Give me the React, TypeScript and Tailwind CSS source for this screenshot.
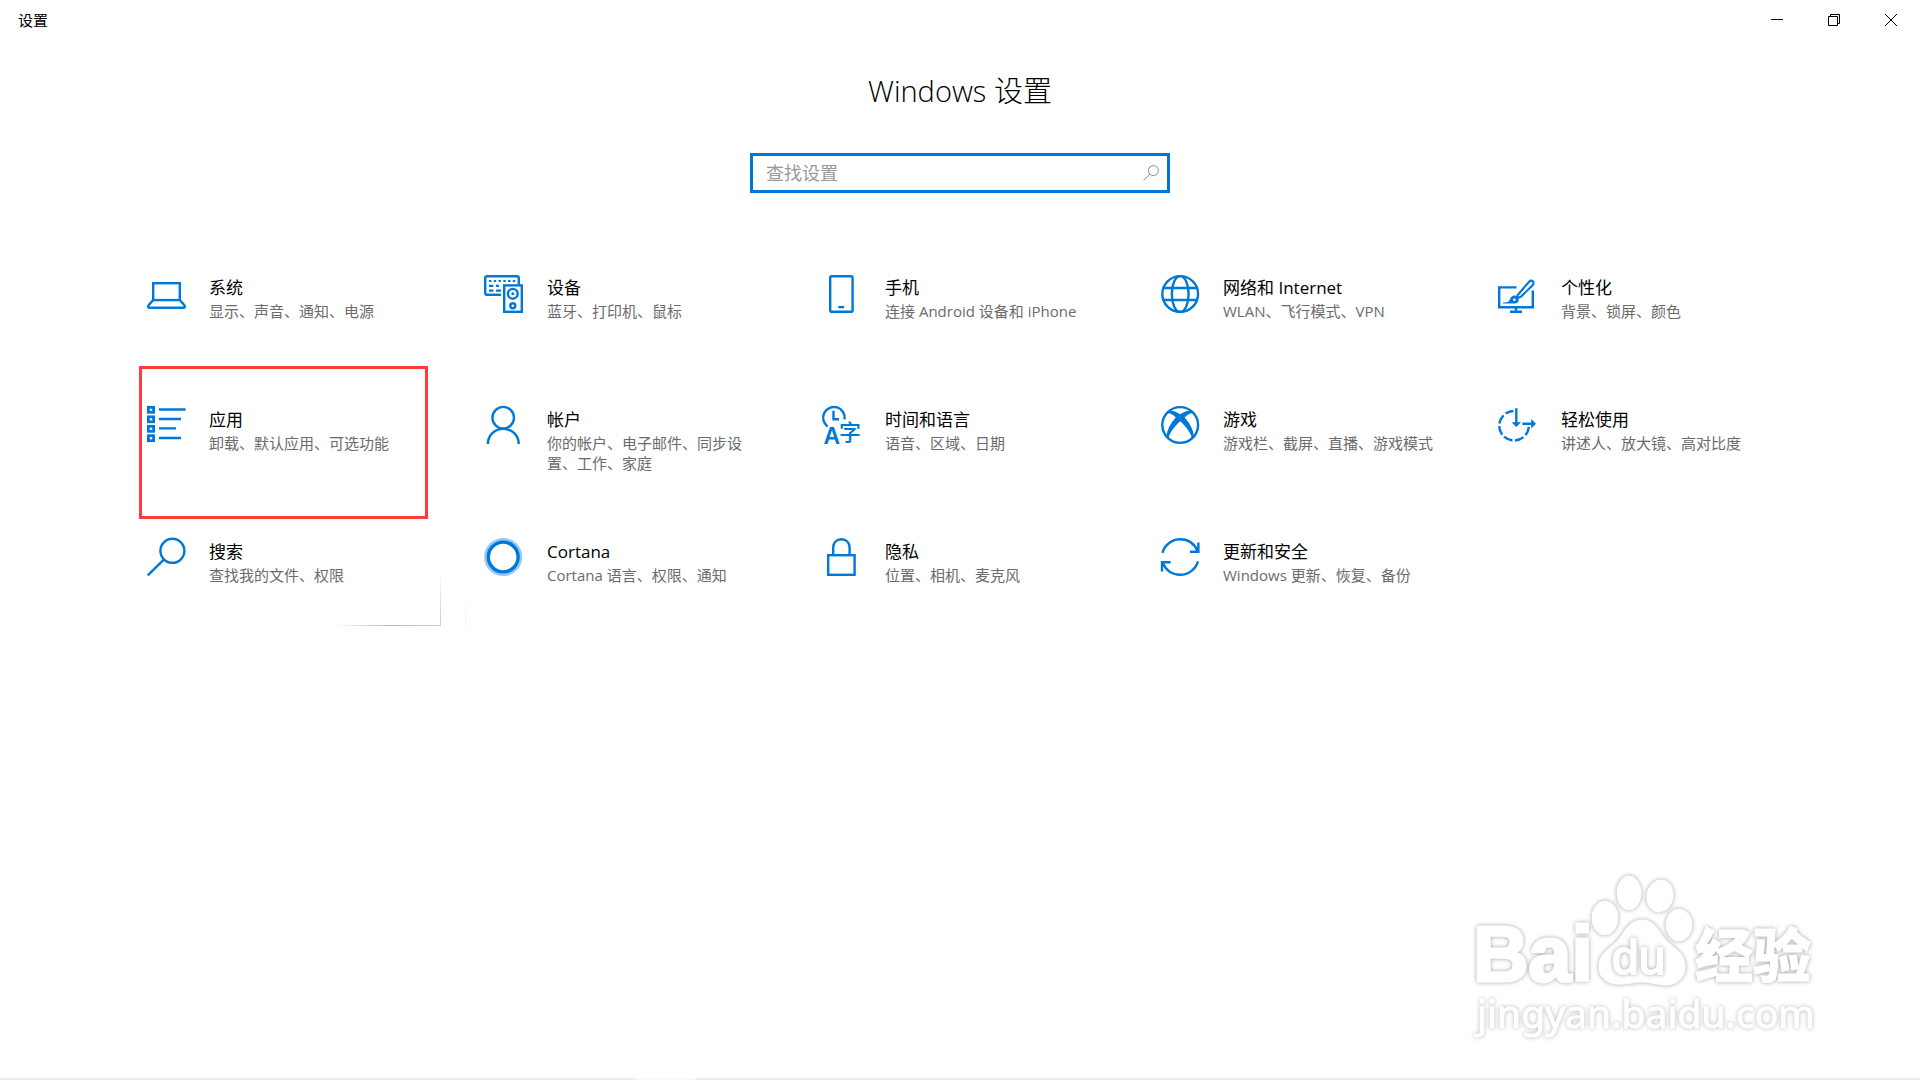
/**
 * Windows Settings home page
 *
 * - Title bar with the window controls
 * - Heading and search box
 * - Grid of category tiles
 */

import type { ReactNode } from "react";

const BLUE = "#0078d7";

// Shared frame for the category icons
function Icon({ children }: { children: ReactNode }) {
  return (
    <svg
      viewBox="0 0 40 40"
      fill="none"
      stroke={BLUE}
      strokeWidth="2.4"
      className="h-10 w-10 shrink-0 overflow-visible"
      aria-hidden="true"
    >
      {children}
    </svg>
  );
}

function SystemIcon() {
  return (
    <Icon>
      <rect x="7.2" y="9.2" width="26.6" height="16.9" />
      <path d="M7 26.2 2.6 31.3C1.7 32.5 2.2 33.8 3.6 33.8H37.4C38.8 33.8 39.3 32.5 38.4 31.3L34 26.2" />
    </Icon>
  );
}

function DevicesIcon() {
  return (
    <Icon>
      <path d="M17 20.8H3.2Q1.2 20.8 1.2 18.8V4.2Q1.2 2.2 3.2 2.2H32.8Q34.8 2.2 34.8 4.2V10.5" />
      <path
        d="M5 7h2.4m2.4 0h2.4m2.3 0h2.4m2.4 0h2.4m2.4 0h2.4m2.3 0h2.4M5 11.8h4.4m2.6 0h3M5 16.6h4.4m2.6 0h5"
        strokeWidth="2.2"
      />
      <rect x="20.2" y="11.4" width="17.6" height="26.4" fill="#fff" />
      <circle cx="28.8" cy="19.8" r="4.9" />
      <circle cx="28.8" cy="19.8" r="1.5" fill={BLUE} stroke="none" />
      <circle cx="28.8" cy="31.7" r="2.5" />
    </Icon>
  );
}

function PhoneIcon() {
  return (
    <Icon>
      <rect x="8.2" y="2.2" width="22.4" height="35.6" rx="1.6" />
      <path d="M16.3 33.1h5.8" />
    </Icon>
  );
}

function NetworkIcon() {
  return (
    <Icon>
      <circle cx="20.2" cy="20" r="17.9" />
      <ellipse cx="20.2" cy="20" rx="8.4" ry="17.9" />
      <path d="M3.5 14H37M3.5 26H37" />
    </Icon>
  );
}

function PersonalizationIcon() {
  return (
    <Icon>
      <path d="M18.5 13.4H1.2V33.2H34.8V16.5M18 33v4.6M12 37.7h12" />
      <path d="M20.4 20.2 31.3 7.6Q33.2 5.8 35 7.4 36.2 9.3 34.6 11.2L23 22.6Q21 24 19.8 22.8 18.8 21.8 20.4 20.2Z" strokeWidth="2.1" />
      <path d="M5 28.4C9 28.6 11.3 27.9 12 25.2 12.9 21.7 16.8 20.4 19.4 22.5 22.3 25 20.7 29.4 16.8 29.5H5Z" fill={BLUE} stroke="none" />
      <circle cx="16.4" cy="25.7" r="1.3" fill="#fff" stroke="none" />
    </Icon>
  );
}

function AppsIcon() {
  return (
    <Icon>
      {[3.8, 13.3, 22.8, 32.2].map((y) => (
        <rect key={y} x="2.4" y={y - 2.5} width="5.2" height="5" strokeWidth="2.8" />
      ))}
      <path d="M13 3.5h26.6M13 13h22M13 22.4h17M13 32h22" />
    </Icon>
  );
}

function AccountsIcon() {
  return (
    <Icon>
      <circle cx="19.2" cy="11.7" r="10.8" />
      <path d="M3.9 38C3.9 29.4 10.7 22.9 19.3 22.9S34.7 29.4 34.7 38" />
    </Icon>
  );
}

function TimeLanguageIcon() {
  return (
    <Icon>
      <path d="M5.6 20.5A10.8 10.8 0 1 1 22.6 13.4M11.5 4.8V13.2H17" />
      <text x="1.6" y="38" fill={BLUE} stroke="none" fontSize="23" fontWeight="700" fontFamily="'Liberation Sans', sans-serif">
        A
      </text>
      <text x="17" y="33.6" fill={BLUE} stroke="none" fontSize="22" fontWeight="500" fontFamily="'Noto Sans CJK SC', sans-serif">
        字
      </text>
    </Icon>
  );
}

function GamingIcon() {
  return (
    <Icon>
      <circle cx="20.2" cy="19" r="17.9" />
      <path
        d="M20.2 8.2C16.7 6 13.2 4.9 10.6 4.6L7.8 7.2C10.3 6.9 13.4 9 15.7 11.4 10.2 17.7 6.3 24.8 6.6 31.6L8.2 33.4C9.2 27.1 14.8 20 20.2 15.3 25.6 20 31.2 27.1 32.2 33.4L33.8 31.6C34.1 24.8 30.2 17.7 24.7 11.4 27 9 30.1 6.9 32.6 7.2L29.8 4.6C27.2 4.9 23.7 6 20.2 8.2Z"
        fill={BLUE}
        stroke="none"
      />
    </Icon>
  );
}

function EaseOfAccessIcon() {
  return (
    <Icon>
      <path d="M15.4 5A14.8 14.8 0 1 0 30.8 20.8" strokeDasharray="9.2 2.7" strokeDashoffset="1" />
      <path d="M18.3 2.3V18M24.4 17.7H34" />
      <path d="M13.6 16.2H23L18.3 20.9ZM33.2 12.9V22.5L38 17.7Z" fill={BLUE} stroke="none" />
    </Icon>
  );
}

function SearchIcon() {
  return (
    <Icon>
      <circle cx="26.4" cy="12.8" r="12" />
      <path d="M17.8 21.6 1.8 37.4" />
    </Icon>
  );
}

function CortanaIcon() {
  return (
    <Icon>
      <circle cx="19.2" cy="19" r="17.4" stroke="#99c9ef" strokeWidth="3.4" />
      <circle cx="19.2" cy="19" r="14.9" strokeWidth="3.4" />
    </Icon>
  );
}

function PrivacyIcon() {
  return (
    <Icon>
      <rect x="6.2" y="17.2" width="26.4" height="19.6" />
      <path d="M11.2 17V9.4C11.2 4.6 14.6 1.2 19.4 1.2S27.6 4.6 27.6 9.4V17" />
    </Icon>
  );
}

function UpdateIcon() {
  return (
    <Icon>
      <path d="M2.4 14.8C4.8 6.7 12 1.3 20.2 1.3 28.3 1.3 34.6 6 37.6 13.2M38.4 4.6V13.8H30" />
      <path d="M38 23.4C35.6 31.5 28.4 36.8 20.2 36.8 12.1 36.8 5.8 32 2.8 24.9M2 33.4V24.3H10.6" />
    </Icon>
  );
}

const categories = [
  { title: "系统", text: "显示、声音、通知、电源", icon: <SystemIcon /> },
  { title: "设备", text: "蓝牙、打印机、鼠标", icon: <DevicesIcon /> },
  { title: "手机", text: "连接 Android 设备和 iPhone", icon: <PhoneIcon /> },
  { title: "网络和 Internet", text: "WLAN、飞行模式、VPN", icon: <NetworkIcon /> },
  { title: "个性化", text: "背景、锁屏、颜色", icon: <PersonalizationIcon /> },
  { title: "应用", text: "卸载、默认应用、可选功能", icon: <AppsIcon />, marked: true },
  { title: "帐户", text: "你的帐户、电子邮件、同步设\n置、工作、家庭", icon: <AccountsIcon /> },
  { title: "时间和语言", text: "语音、区域、日期", icon: <TimeLanguageIcon /> },
  { title: "游戏", text: "游戏栏、截屏、直播、游戏模式", icon: <GamingIcon /> },
  { title: "轻松使用", text: "讲述人、放大镜、高对比度", icon: <EaseOfAccessIcon /> },
  { title: "搜索", text: "查找我的文件、权限", icon: <SearchIcon />, shadow: true },
  { title: "Cortana", text: "Cortana 语言、权限、通知", icon: <CortanaIcon /> },
  { title: "隐私", text: "位置、相机、麦克风", icon: <PrivacyIcon /> },
  { title: "更新和安全", text: "Windows 更新、恢复、备份", icon: <UpdateIcon /> },
];

function TitleBar() {
  const button = "flex h-10 w-[57px] items-center justify-center hover:bg-gray-200";
  return (
    <header className="flex items-center justify-between">
      <span className="pl-[18px] text-[15px] leading-10">设置</span>
      <div className="flex pr-px">
        <button type="button" aria-label="最小化" className={button}>
          <svg viewBox="0 0 12 12" className="h-3 w-3" stroke="#000" fill="none">
            <path d="M0 5.5h12" />
          </svg>
        </button>
        <button type="button" aria-label="还原" className={button}>
          <svg viewBox="0 0 12 12" className="h-3 w-3" stroke="#000" fill="none">
            <path d="M.5 2.5h9v9h-9zM2.5 2.5v-2h9v9h-2" />
          </svg>
        </button>
        <button type="button" aria-label="关闭" className={button}>
          <svg viewBox="0 0 12 12" className="h-3 w-3" stroke="#000" fill="none">
            <path d="M0 0l12 12M12 0 0 12" />
          </svg>
        </button>
      </div>
    </header>
  );
}

function SearchBox() {
  return (
    <label className="mt-[42px] flex h-10 w-full max-w-[420px] items-center border-3 border-[#0078d7] bg-white pr-2 pl-[13px]">
      <input
        type="text"
        aria-label="查找设置"
        placeholder="查找设置"
        className="min-w-0 flex-1 text-lg leading-7 outline-none placeholder:text-[#999]"
      />
      <svg viewBox="0 0 16 16" className="h-4 w-4" fill="none" stroke="#8a8a8a" aria-hidden="true">
        <circle cx="10.4" cy="5.6" r="5" />
        <path d="M6.8 9.2.5 15.4" />
      </svg>
    </label>
  );
}

// Paw logo in white with a soft grey rim, pinned to the bottom right corner
function Watermark() {
  const rim = "drop-shadow-[0_0_2px_#a4a4a4]";
  return (
    <svg
      viewBox="1470 870 360 180"
      className="pointer-events-none absolute right-[90px] bottom-[30px] h-[180px] w-[360px]"
      fill="#fff"
      stroke="#fff"
      strokeLinejoin="round"
      role="img"
      aria-label="Baidu 经验"
    >
      <g className={rim}>
        <text x="1473" y="981" fontSize="77" strokeWidth="3" fontWeight="700" fontFamily="'Liberation Sans', sans-serif">Bai</text>
      </g>
      <g className={rim}>
        <ellipse cx="1605" cy="918" rx="13" ry="17" />
        <ellipse cx="1629" cy="893" rx="12" ry="17" />
        <ellipse cx="1660" cy="896" rx="13" ry="16" transform="rotate(10 1660 896)" />
        <ellipse cx="1679" cy="925" rx="13" ry="16" />
        <path d="M1641 920C1652 919 1657 928 1664 938 1671 947 1684 951 1685 965 1686 978 1676 986 1664 985 1655 984 1650 982 1641 982 1632 982 1627 985 1616 984 1605 983 1598 976 1599 965 1600 952 1612 948 1619 939 1626 929 1630 921 1641 920Z" />
      </g>
      <g className={rim}>
        <text x="1612" y="974" fontSize="48" strokeWidth="2" fontFamily="'Liberation Sans', sans-serif">du</text>
      </g>
      <g className={rim}>
        <text x="1695" y="977" fontSize="58" fontWeight="900" strokeWidth="1" fontFamily="'Noto Sans CJK SC', sans-serif">经验</text>
      </g>
      <g className="drop-shadow-[0_0_2px_#b8b8b8]">
        <text x="1477" y="1028" fontSize="39" strokeWidth="1" fontFamily="'Noto Sans', sans-serif">jingyan.baidu.com</text>
      </g>
    </svg>
  );
}

export default function App() {
  return (
    <div className="relative flex min-h-screen flex-col bg-white font-['Open_Sans','Noto_Sans_CJK_SC',sans-serif] text-black">
      <TitleBar />

      <main className="flex flex-1 flex-col items-center pt-[31px]">
        <h1 className="text-[29px] leading-10 font-light">Windows 设置</h1>
        <SearchBox />

        {/* Category tiles */}
        <nav className="mt-[81px] grid w-full max-w-[1690px] auto-rows-[132px] grid-cols-5">
          {categories.map((item) => (
            <a key={item.title} href="#" className="relative flex items-start gap-[23px] pl-[31px]">
              {item.icon}
              <span className="flex flex-col whitespace-pre">
                <span className="text-[17px] leading-[27px]">{item.title}</span>
                <span className="text-[15px] leading-5 text-[#6b6b6b]">{item.text}</span>
              </span>
              {item.marked && (
                <span className="absolute -top-10 left-6 h-[153px] w-[289px] border-3 border-[#ff3b3b]" />
              )}
              {item.shadow && (
                <>
                  <span className="absolute top-[87px] left-[220px] h-px w-[106px] bg-linear-to-r from-transparent via-[#bbb] to-[#ccc]" />
                  <span className="absolute top-8 left-[325px] h-[55px] w-px bg-linear-to-b from-transparent to-[#ccc]" />
                  <span className="absolute top-14 left-[350px] h-8 w-px bg-linear-to-b from-transparent to-[#eee]" />
                </>
              )}
            </a>
          ))}
        </nav>
      </main>

      <Watermark />

      <footer className="flex h-0.5 bg-[#ececec]">
        <span className="ml-[33%] w-[61px] bg-[#f8f8f8]" />
      </footer>
    </div>
  );
}
